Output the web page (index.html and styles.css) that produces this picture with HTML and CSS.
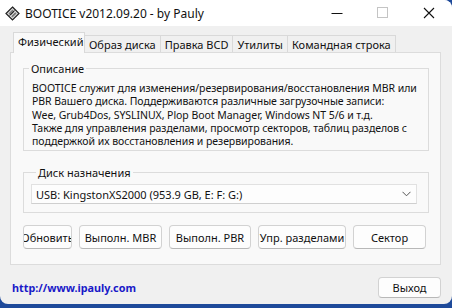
FILE: index.html
```html
<!DOCTYPE html>
<html lang="ru">
<head>
    <meta charset="UTF-8">
    <title>BOOTICE</title>
    <link rel="stylesheet" href="styles.css">
</head>
<body>
    <div class="window">
        <!-- title bar -->
        <div class="titlebar">
            <svg class="app-icon" width="15" height="15" viewBox="0 0 15 15">
                <polygon points="7.5,1 14,7.5 7.5,14 1,7.5" fill="#d8d8d8" stroke="#202020" stroke-width="1.2"/>
                <polygon points="7.5,3.5 11.5,7.5 7.5,11.5 3.5,7.5" fill="#7a7a7a"/>
                <line x1="4.5" y1="9.5" x2="9.5" y2="4.5" stroke="#202020" stroke-width="0.9"/>
                <line x1="5.5" y1="10.5" x2="10.5" y2="5.5" stroke="#ffffff" stroke-width="0.7"/>
            </svg>
            <span class="title">BOOTICE v2012.09.20 - by Pauly</span>
            <div class="controls">
                <div class="ctl">
                    <svg width="12" height="12" viewBox="0 0 12 12"><line x1="0.5" y1="6.5" x2="11.5" y2="6.5" stroke="#111" stroke-width="1"/></svg>
                </div>
                <div class="ctl">
                    <svg width="12" height="12" viewBox="0 0 12 12"><rect x="0.5" y="0.5" width="10" height="10" fill="none" stroke="#c4c4c4" stroke-width="1"/></svg>
                </div>
                <div class="ctl">
                    <svg width="12" height="12" viewBox="0 0 12 12"><path d="M1 1 L11 11 M11 1 L1 11" stroke="#111" stroke-width="1.1"/></svg>
                </div>
            </div>
        </div>

        <div class="client">
            <div class="tabs">
                <div class="tab active">Физический</div>
                <div class="tab">Образ диска</div>
                <div class="tab">Правка BCD</div>
                <div class="tab">Утилиты</div>
                <div class="tab">Командная строка</div>
            </div>

            <div class="panel">
                <fieldset class="group desc">
                    <legend>Описание</legend>
                    <p>BOOTICE служит для изменения/резервирования/восстановления MBR или</p>
                    <p>PBR Вашего диска. Поддерживаются различные загрузочные записи:</p>
                    <p>Wee, Grub4Dos, SYSLINUX, Plop Boot Manager, Windows NT 5/6 и т.д.</p>
                    <p>Также для управления разделами, просмотр секторов, таблиц разделов с</p>
                    <p>поддержкой их восстановления и резервирования.</p>
                </fieldset>

                <fieldset class="group target">
                    <legend>Диск назначения</legend>
                    <div class="combo">
                        <span>USB: KingstonXS2000 (953.9 GB, E: F: G:)</span>
                        <svg width="9" height="6" viewBox="0 0 9 6"><path d="M0.5 0.8 L4.5 4.8 L8.5 0.8" fill="none" stroke="#555" stroke-width="1"/></svg>
                    </div>
                </fieldset>

                <div class="actions">
                    <div class="btn w1"><span>Обновить</span></div>
                    <div class="btn w2"><span>Выполн. MBR</span></div>
                    <div class="btn w3"><span>Выполн. PBR</span></div>
                    <div class="btn w4"><span>Упр. разделами</span></div>
                    <div class="btn w5"><span>Сектор</span></div>
                </div>
            </div>

            <div class="footer">
                <a href="#" class="site">http://www.ipauly.com</a>
                <div class="btn exit"><span>Выход</span></div>
            </div>
        </div>
    </div>
</body>
</html>
```

FILE: styles.css
```css
* {
    box-sizing: border-box;
}

body {
    margin: 0;
    width: 452px;
    height: 308px;
    overflow: hidden;
    background-color: #1e4a9a;
    font-family: "Noto Sans", "Open Sans", sans-serif;
    font-size: 11px;
    color: #000;
}

.window {
    width: 452px;
    height: 304px;
    background-color: #f0f0f0;
    border-radius: 0 8px 8px 8px;
    overflow: hidden;
}

/* title bar */
.titlebar {
    height: 26px;
    background-color: #fff;
    display: flex;
    align-items: center;
    padding-left: 5px;
}

.app-icon {
    margin-right: 5px;
}

.title {
    font-size: 12px;
    color: #111;
}

.controls {
    margin-left: auto;
    display: flex;
    height: 100%;
}

.ctl {
    width: 46px;
    display: flex;
    align-items: center;
    justify-content: center;
}

.client {
    padding: 7px 11px 0 10px;
}

/* tabs */
.tabs {
    display: flex;
    align-items: flex-end;
    padding-left: 3px;
    height: 19px;
    position: relative;
    z-index: 1;
}

.tab {
    height: 17px;
    padding: 0 4px;
    border: 1px solid #d9d9d9;
    border-bottom: none;
    margin-left: -1px;
    background-color: #f0f0f0;
    display: flex;
    align-items: center;
    color: #111;
}

.tab.active {
    height: 21px;
    margin-bottom: -1px;
    margin-left: 0;
    background-color: #f9f9f9;
    padding: 0 4px 4px 4px;
    width: 72px;
}

.panel {
    height: 213px;
    background-color: #f9f9f9;
    border: 1px solid #dcdcdc;
    padding: 8px 11px 0 12px;
}

.group {
    margin: 0;
    border: 1px solid #dcdcdc;
    padding: 0;
}

.group legend {
    margin-left: 5px;
    padding: 0 2px;
    color: #111;
}

.desc {
    height: 90px;
    padding-top: 6px;
}

.desc p {
    margin: 0 0 0 8px;
    line-height: 13.3px;
    font-size: 10.5px;
    letter-spacing: -0.05px;
    white-space: nowrap;
    color: #111;
}

.target {
    margin-top: 14px;
    height: 48px;
    padding: 4px 11px 0 7px;
}

.combo {
    height: 20px;
    background-color: #fdfdfd;
    border: 1px solid #e1e1e1;
    border-bottom-color: #cfcfcf;
    display: flex;
    align-items: center;
    justify-content: space-between;
    padding: 0 5px 0 4px;
    color: #111;
}

/* buttons */
.actions {
    display: flex;
    gap: 7px;
    margin-top: 12px;
}

.btn {
    height: 24px;
    background-color: #fdfdfd;
    border: 1px solid #d2d2d2;
    border-bottom-color: #b8b8b8;
    border-radius: 4px;
    display: flex;
    align-items: center;
    justify-content: center;
    overflow: hidden;
    white-space: nowrap;
    color: #111;
}

.w1 { width: 49px; }
.w2 { width: 83px; }
.w3 { width: 82px; }
.w4 { width: 88px; }
.w5 { width: 73px; }

.footer {
    display: flex;
    align-items: center;
    justify-content: space-between;
    padding: 12px 0 0 2px;
}

.site {
    color: #1919c8;
    font-weight: bold;
    text-decoration: none;
    font-size: 10.8px;
}

.exit {
    width: 63px;
    height: 21px;
}
```
